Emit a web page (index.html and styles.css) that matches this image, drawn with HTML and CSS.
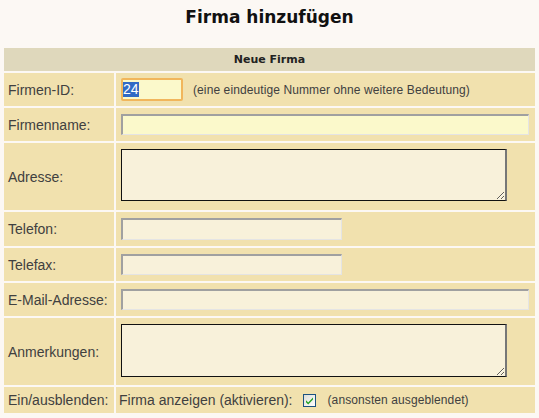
FILE: index.html
```html
<!DOCTYPE html>
<html lang="de">
<head>
<meta charset="utf-8">
<title>Firma hinzufügen</title>
<link rel="stylesheet" href="styles.css">
</head>
<body>
<h1 class="title">Firma hinzufügen</h1>
<form class="form">
  <div class="head">Neue Firma</div>

  <div class="label">Firmen-ID:</div>
  <div class="value">
    <div class="idbox"><span class="sel">24</span></div>
    <span class="hint hint-id">(eine eindeutige Nummer ohne weitere Bedeutung)</span>
  </div>

  <div class="label">Firmenname:</div>
  <div class="value"><input class="field field-wide field-yellow" type="text"></div>

  <div class="label">Adresse:</div>
  <div class="value value-top"><textarea class="area"></textarea></div>

  <div class="label">Telefon:</div>
  <div class="value"><input class="field field-mid field-tel" type="text"></div>

  <div class="label">Telefax:</div>
  <div class="value"><input class="field field-mid" type="text"></div>

  <div class="label">E-Mail-Adresse:</div>
  <div class="value"><input class="field field-wide" type="text"></div>

  <div class="label">Anmerkungen:</div>
  <div class="value value-top"><textarea class="area area-notes"></textarea></div>

  <div class="label">Ein/ausblenden:</div>
  <div class="value value-check">
    <span class="check-label">Firma anzeigen (aktivieren):</span>
    <svg class="checkbox" width="13" height="13" viewBox="0 0 13 13">
      <defs>
        <linearGradient id="cbg" x1="0" y1="0" x2="1" y2="1">
          <stop offset="0" stop-color="#dcdcd6"/>
          <stop offset="1" stop-color="#ffffff"/>
        </linearGradient>
      </defs>
      <rect x="0.5" y="0.5" width="12" height="12" fill="url(#cbg)" stroke="#1c5180"/>
      <path d="M3 6.2 L5.2 8.4 L10 3.6 L10 5.6 L5.2 10.4 L3 8.2 Z" fill="#21a121"/>
    </svg>
    <span class="hint hint-check">(ansonsten ausgeblendet)</span>
  </div>
</form>
</body>
</html>
```
FILE: styles.css
```css
html, body {
  margin: 0;
  padding: 0;
  background: #fcf8f4;
}

body {
  font-family: "Liberation Sans", Arial, sans-serif;
  color: #404040;
}

.title {
  margin: 7px 0 21px;
  font-family: "DejaVu Sans", Verdana, sans-serif;
  font-weight: bold;
  font-size: 17px;
  line-height: 20px;
  text-align: center;
  color: #111;
}

.form {
  margin: 0 4px;
  display: grid;
  grid-template-columns: 110px 1fr;
  grid-template-rows: 23px 33px 33px 67px 34px 33px 33px 67px 26px;
  gap: 2px;
}

.head {
  grid-column: 1 / 3;
  background: #dfd8bc;
  display: flex;
  align-items: center;
  justify-content: center;
  font-family: "DejaVu Sans", Verdana, sans-serif;
  font-weight: bold;
  font-size: 11px;
  color: #222;
}

.label {
  background: #f1e1ae;
  display: flex;
  align-items: center;
  padding-left: 4px;
  font-size: 14px;
}

.value {
  background: #f1e1ae;
  display: flex;
  align-items: center;
  padding-left: 5px;
}

.value-top {
  align-items: flex-start;
  padding-top: 6px;
}

.value-check {
  padding-left: 3px;
  font-size: 14px;
}

.idbox {
  box-sizing: border-box;
  width: 62px;
  height: 23px;
  border: 2px solid #f1b65c;
  border-radius: 2px;
  background: #fbf9cb;
  display: flex;
  align-items: center;
  padding-left: 0;
}

.sel {
  background: #316ac5;
  color: #fff;
  font-size: 14px;
  line-height: 15px;
  padding: 0 0 0 0;
  letter-spacing: 0;
}

.hint {
  font-size: 12px;
  letter-spacing: 0.1px;
  color: #404040;
}

.hint-id {
  margin-left: 10px;
}

.field {
  box-sizing: border-box;
  height: 21px;
  margin: 0;
  padding: 0 2px;
  border-width: 2px 1px 1px 2px;
  border-style: solid;
  border-color: #a0a0a0 #e4e4e4 #e4e4e4 #a0a0a0;
  background: #f8f1da;
  font-family: "Liberation Sans", Arial, sans-serif;
  font-size: 13px;
}

.field-tel {
  height: 22px;
}

.field-wide {
  width: 408px;
}

.field-mid {
  width: 221px;
}

.field-yellow {
  background: #fbf9cb;
}

.area {
  box-sizing: border-box;
  display: block;
  width: 386px;
  height: 52px;
  margin: 0;
  padding: 1px;
  border: 1px solid #111;
  border-right: 2px solid #777;
  background: #f8f1da;
  font-family: "Liberation Sans", Arial, sans-serif;
  font-size: 13px;
}

.area-notes {
  height: 53px;
}

.checkbox {
  margin-left: 10px;
  flex: none;
}

.hint-check {
  margin-left: 12px;
}
```
